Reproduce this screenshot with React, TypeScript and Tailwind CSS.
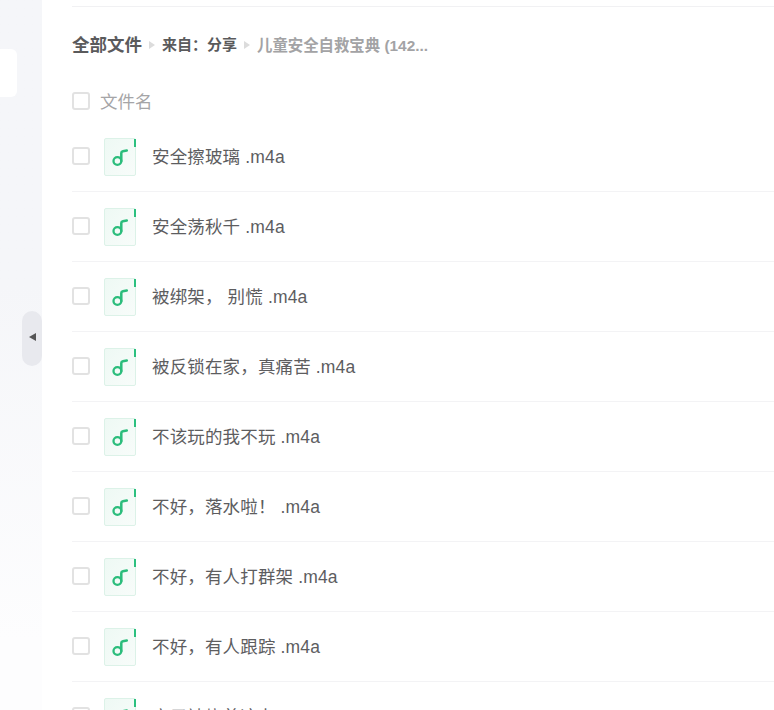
const files = [
  "安全擦玻璃 .m4a",
  "安全荡秋千 .m4a",
  "被绑架， 别慌 .m4a",
  "被反锁在家，真痛苦 .m4a",
  "不该玩的我不玩 .m4a",
  "不好，落水啦！ .m4a",
  "不好，有人打群架 .m4a",
  "不好，有人跟踪 .m4a",
  "房子被烧着这办 .m4a",
];

function FileIcon() {
  return (
    <div className="relative h-[38px] w-8 shrink-0 rounded-[2px] border border-[#dcf2e8] bg-gradient-to-br from-[#eef9f4] to-[#f8fcfa]">
      <div className="absolute right-[-1px] top-[0px] h-[8px] w-[2px] bg-[#2cc07f]" />
      <svg viewBox="0 0 32 38" className="absolute left-[-1px] top-[-1px] h-[38px] w-8" fill="none">
        <circle cx="13.4" cy="23" r="3.9" stroke="#2cbd7c" strokeWidth="2.3" />
        <path d="M17.3 23V15c0-.9.6-1.6 1.6-1.8l3.9-.7" stroke="#2cbd7c" strokeWidth="2.5" strokeLinecap="round" />
      </svg>
    </div>
  );
}

function Checkbox() {
  return <div className="h-[18px] w-[18px] shrink-0 rounded-[3px] border-2 border-[#e2e2e2] bg-white" />;
}

export default function App() {
  return (
    <div
      className="flex h-[710px] w-[774px] overflow-hidden bg-white text-[#5d5d5f]"
      style={{ fontFamily: '"Liberation Sans", "Noto Sans CJK SC", sans-serif' }}
    >
      <aside className="relative w-[42px] shrink-0 bg-gradient-to-b from-[#f5f6f9] from-40% to-[#fdfdfe] to-90%">
        <div className="absolute left-0 top-[49px] h-12 w-[17px] rounded-r-[6px] bg-white" />
        <div className="absolute left-[22px] top-[311px] flex h-[55px] w-5 items-center justify-center rounded-[10px] bg-[#e8e9ee]">
          <div className="mb-[3px] h-0 w-0 border-y-[4.5px] border-r-[7px] border-y-transparent border-r-[#555]" />
        </div>
      </aside>
      <main className="min-w-0 flex-1 pl-[30px]">
        <div className="h-[7px] border-b border-[#f1f1f3]" />
        <nav className="flex h-[75px] items-center font-bold">
          <span className="mt-[2px] text-[17.5px] text-[#5a5a5c]">全部文件</span>
          <span className="mx-[7px] h-0 w-0 border-y-[4px] border-l-[6px] border-y-transparent border-l-[#dcdcdc]" />
          <span className="mt-[2px] text-[15px] text-[#5a5a5c]">来自：分享</span>
          <span className="ml-[7px] mr-[7px] h-0 w-0 border-y-[4px] border-l-[6px] border-y-transparent border-l-[#dcdcdc]" />
          <span className="mt-[2px] text-[15.4px] text-[#a3a3a5]">儿童安全自救宝典 (142...</span>
        </nav>
        <div className="flex h-[38px] items-center">
          <Checkbox />
          <span className="ml-[10px] mt-[4px] text-[17.5px] leading-none text-[#a5a5a7]">文件名</span>
        </div>
        <ul className="mt-[2px]">
          {files.map((name) => (
            <li key={name} className="flex h-[70px] items-center border-b border-[#f3f3f5] pb-[2px]">
              <Checkbox />
              <div className="ml-[14px] mt-[2px]">
                <FileIcon />
              </div>
              <span className="ml-4 mt-[4px] text-[17.5px] leading-none tracking-[0.15px]">{name}</span>
            </li>
          ))}
        </ul>
      </main>
    </div>
  );
}
